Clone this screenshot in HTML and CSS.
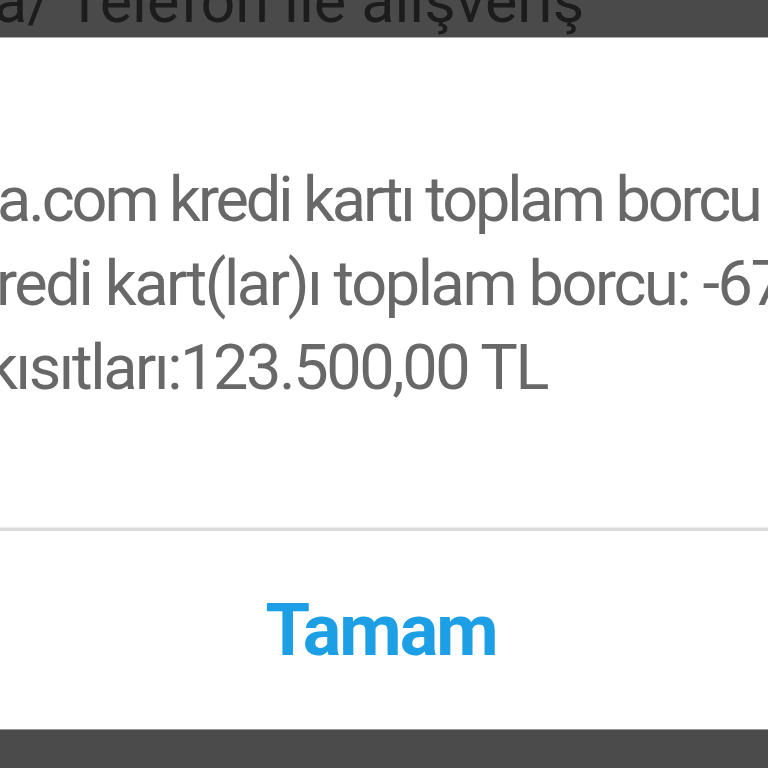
FILE: index.html
```html
<!DOCTYPE html>
<html lang="tr">
<head>
<meta charset="utf-8">
<link rel="stylesheet" href="styles.css">
</head>
<body>
<div class="screen">
  <div class="backdrop-top">
    <div class="behind-text">a/ Telefon ile alışveriş</div>
  </div>
  <div class="dialog">
    <div class="message">
      <div class="line l1">a.com kredi kartı toplam borcu</div>
      <div class="line l2">redi kart(lar)ı toplam borcu: -67</div>
      <div class="line l3">kısıtları:123.500,00 TL</div>
    </div>
    <div class="divider"></div>
    <div class="actions">
      <span class="ok">Tamam</span>
    </div>
  </div>
  <div class="backdrop-bottom"></div>
</div>
</body>
</html>
```
FILE: styles.css
```css
html, body {
  margin: 0;
  padding: 0;
  width: 768px;
  height: 768px;
  overflow: hidden;
  background: #4b4b4b;
}
.screen {
  width: 768px;
  height: 768px;
  display: flex;
  flex-direction: column;
  overflow: hidden;
}
.backdrop-top {
  height: 38px;
  flex: none;
  background: #4a4a4a;
  overflow: hidden;
  border-bottom: 1px solid #a9a9a9;
  box-sizing: border-box;
}
.behind-text {
  font-family: Roboto, "Liberation Sans", sans-serif;
  font-size: 61px;
  line-height: 61px;
  color: #1c1c1c;
  white-space: nowrap;
  margin-top: -29px;
  margin-left: -6px;
  letter-spacing: 0;
}
.dialog {
  flex: none;
  height: 691px;
  background: #ffffff;
  display: flex;
  flex-direction: column;
}
.message {
  padding-top: 120px;
  height: 369px;
  box-sizing: border-box;
  font-family: Roboto, "Liberation Sans", sans-serif;
  font-size: 63px;
  line-height: 84px;
  color: #686868;
  white-space: nowrap;
  overflow: hidden;
  letter-spacing: -2.4px;
}
.l1 { margin-left: -3px; letter-spacing: -3.1px; }
.l2 { margin-left: -4px; }
.l3 { margin-left: -14px; }
.divider {
  height: 4px;
  flex: none;
  background: #dcdcdc;
  border-top: 1px solid #ececec;
  box-sizing: border-box;
  margin-top: 120px;
}
.actions {
  flex: 1;
  display: flex;
  align-items: center;
  justify-content: center;
}
.ok {
  font-family: Roboto, "Liberation Sans", sans-serif;
  font-weight: bold;
  font-size: 72px;
  color: #1d9fe5;
  letter-spacing: -2px;
  margin-left: -6px;
}
.backdrop-bottom {
  flex: 1;
  background: #4b4b4b;
  border-top: 1px solid #9a9a9a;
}
```
